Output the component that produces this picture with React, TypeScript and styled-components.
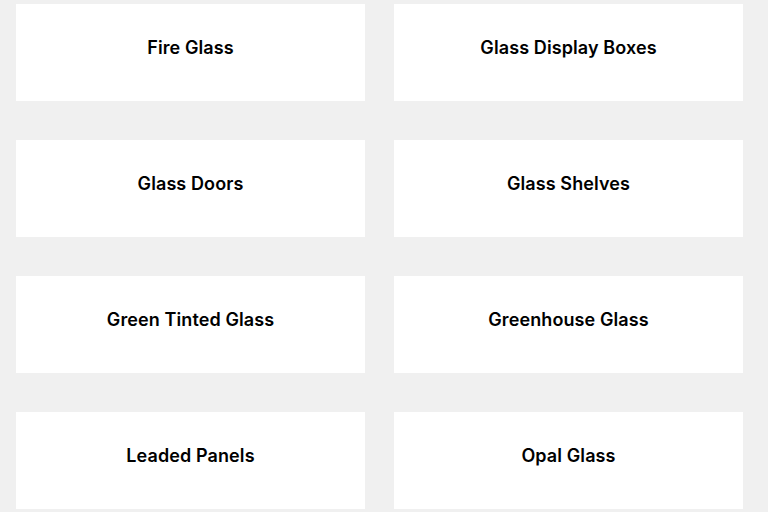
import React from 'react';
import styled, {createGlobalStyle} from 'styled-components';

const GlobalStyle = createGlobalStyle`
  html, body {
    margin: 0;
    padding: 0;
    background: #f0f0f0;
  }
  body {
    font-family: Inter, "Open Sans", sans-serif;
  }
`;

const Page = styled.div`
  width: 768px;
  height: 512px;
  overflow: hidden;
  box-sizing: border-box;
  padding: 4px 0 0 16px;
`;

const CategoryGrid = styled.div`
  display: grid;
  grid-template-columns: 349px 349px;
  column-gap: 29px;
  row-gap: 39px;
`;

const CategoryCard = styled.a`
  display: flex;
  align-items: center;
  justify-content: center;
  height: 97px;
  box-sizing: border-box;
  padding-bottom: 11px;
  background: #ffffff;
  color: #000000;
  text-decoration: none;
`;

const CategoryTitle = styled.h3`
  margin: 0;
  font-family: Inter, "Open Sans", sans-serif;
  font-size: 18px;
  font-weight: 600;
  letter-spacing: 0.1px;
`;

const categories = [
  'Fire Glass',
  'Glass Display Boxes',
  'Glass Doors',
  'Glass Shelves',
  'Green Tinted Glass',
  'Greenhouse Glass',
  'Leaded Panels',
  'Opal Glass'
];

export default function App() {
  return (
    <Page>
      <GlobalStyle />
      <CategoryGrid>
        {categories.map(name => (
          <CategoryCard key={name} href="#">
            <CategoryTitle>{name}</CategoryTitle>
          </CategoryCard>
        ))}
      </CategoryGrid>
    </Page>
  );
}
